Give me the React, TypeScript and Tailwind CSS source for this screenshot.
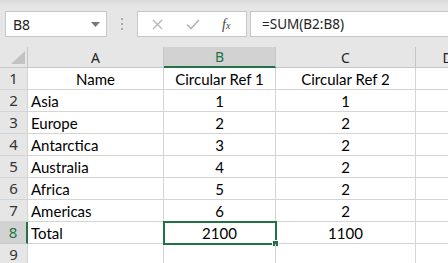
import React from "react";

const GREEN = "#217346";
const cols = [
  { key: "A", w: 136 },
  { key: "B", w: 112 },
  { key: "C", w: 140 },
  { key: "D", w: 64 },
];

const rows: [string, string, string][] = [
  ["Name", "Circular Ref 1", "Circular Ref 2"],
  ["Asia", "1", "1"],
  ["Europe", "2", "2"],
  ["Antarctica", "3", "2"],
  ["Australia", "4", "2"],
  ["Africa", "5", "2"],
  ["Americas", "6", "2"],
  ["Total", "2100", "1100"],
  ["", "", ""],
];

const cellFont = { fontFamily: "Lato, 'Liberation Sans', sans-serif" };
const uiFont = { fontFamily: "'Noto Sans', 'Open Sans', sans-serif" };

export default function App() {
  return (
    <div className="w-[448px] h-[263px] overflow-hidden bg-white relative">
      {/* Toolbar */}
      <div className="h-[47px] bg-[#e6e6e6] flex items-start pt-[11px] relative">
        <div className="absolute top-0 left-0 right-0 h-[6px] bg-gradient-to-b from-[#d9d9d9] to-[#e6e6e6]" />
        <div className="ml-[5px] w-[102px] h-[26px] bg-white border border-[#c6c6c6] flex items-center justify-between pl-[7px] pr-[6px] relative">
          <span className="text-[14px] text-[#222]" style={uiFont}>B8</span>
          <svg width="9" height="5" viewBox="0 0 9 5"><path d="M0 0 H9 L4.5 5 Z" fill="#777" /></svg>
        </div>
        <div className="w-[30px] h-[26px] flex flex-col items-center justify-center gap-[3px]">
          <div className="w-[2px] h-[2px] bg-[#a8a8a8]" />
          <div className="w-[2px] h-[2px] bg-[#a8a8a8]" />
          <div className="w-[2px] h-[2px] bg-[#a8a8a8]" />
        </div>
        <div className="w-[110px] h-[26px] bg-white border border-[#c6c6c6] flex items-center relative">
          <svg className="absolute left-[14px] top-[7px]" width="11" height="11" viewBox="0 0 11 11">
            <path d="M1 1 L10 10 M10 1 L1 10" stroke="#b4b4b4" strokeWidth="1.3" />
          </svg>
          <svg className="absolute left-[48px] top-[7px]" width="14" height="11" viewBox="0 0 14 11">
            <path d="M1 5.5 L5 9.5 L13 1" stroke="#b4b4b4" strokeWidth="1.6" fill="none" />
          </svg>
          <span
            className="absolute left-[84px] top-[2px] text-[14px] italic text-[#444]"
            style={{ fontFamily: "'Liberation Serif', serif" }}
          >
            f<span className="text-[10px]">x</span>
          </span>
        </div>
        <div className="ml-[3px] flex-1 h-[26px] bg-white border border-[#c6c6c6] border-r-0 flex items-center pl-[11px]">
          <span className="text-[13.5px] text-[#222]" style={uiFont}>=SUM(B2:B8)</span>
        </div>
      </div>

      {/* Header row */}
      <div className="flex h-[21px] bg-[#e6e6e6] border-b border-[#c6c6c6]">
        <div className="w-[28px] shrink-0 border-r border-[#c6c6c6] relative">
          <svg className="absolute right-[2px] bottom-[3px]" width="14" height="13" viewBox="0 0 14 13">
            <path d="M14 0 L14 13 L0 13 Z" fill="#c2c2c2" />
          </svg>
        </div>
        {cols.map((c) => {
          const sel = c.key === "B";
          return (
            <div
              key={c.key}
              className={
                sel
                  ? "shrink-0 flex items-center justify-center border-r border-[#c6c6c6] bg-[#d2d2d2] border-b-2 border-b-[#217346] -mb-[1px] text-[#217346] text-[14px]"
                  : "shrink-0 flex items-center justify-center border-r border-[#c6c6c6] text-[#222] text-[14px]"
              }
              style={{ width: c.w, ...uiFont }}
            >
              {c.key}
            </div>
          );
        })}
      </div>

      {/* Data rows */}
      {rows.map((r, i) => {
        const n = i + 1;
        const sel = n === 8;
        return (
          <div key={n} className="flex h-[22px]">
            <div
              className={
                sel
                  ? "w-[28px] shrink-0 bg-[#d2d2d2] border-r-2 border-r-[#217346] border-b border-[#c6c6c6] flex items-end justify-center pb-[1px] text-[15px] text-[#217346]"
                  : "w-[28px] shrink-0 bg-[#e6e6e6] border-r border-[#c6c6c6] border-b border-[#d4d4d4] flex items-end justify-center pb-[1px] text-[15px] text-[#333]"
              }
              style={uiFont}
            >
              <span className="leading-[20px]">{n}</span>
            </div>
            <div
              className={
                i === 0
                  ? "w-[136px] shrink-0 border-r border-b border-[#d4d4d4] flex items-end justify-center text-[15px] text-black"
                  : "w-[136px] shrink-0 border-r border-b border-[#d4d4d4] flex items-end pl-[3px] text-[15px] text-black"
              }
              style={cellFont}
            >
              <span className="leading-[20px]">{r[0]}</span>
            </div>
            <div
              className="w-[112px] shrink-0 border-r border-b border-[#d4d4d4] flex items-end justify-center text-[15px] text-black relative"
              style={cellFont}
            >
              <span className="leading-[20px]">{r[1]}</span>
              {sel && (
                <>
                  <div className="absolute -left-[1px] -top-[1px] w-[114px] h-[24px] border-2 border-[#217346]" />
                  <div className="absolute -right-[4px] -bottom-[4px] w-[7px] h-[7px] bg-[#217346] border border-white" />
                </>
              )}
            </div>
            <div
              className="w-[140px] shrink-0 border-r border-b border-[#d4d4d4] flex items-end justify-center text-[15px] text-black"
              style={cellFont}
            >
              <span className="leading-[20px]">{r[2]}</span>
            </div>
            <div className="w-[64px] shrink-0 border-r border-b border-[#d4d4d4]" />
          </div>
        );
      })}
      <span className="hidden" style={{ color: GREEN }} />
    </div>
  );
}
